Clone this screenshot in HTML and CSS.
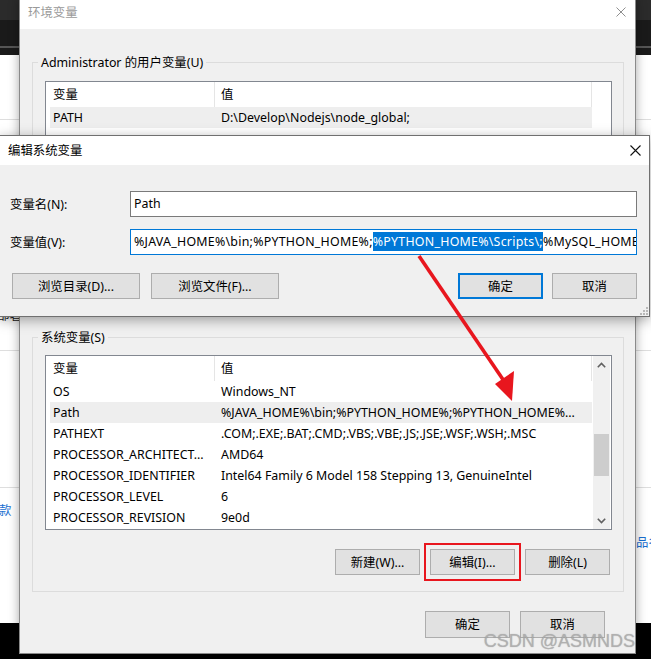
FILE: index.html
```html
<!DOCTYPE html>
<html lang="zh-CN">
<head>
<meta charset="utf-8">
<title>环境变量</title>
<link rel="stylesheet" href="styles.css">
</head>
<body>
<div class="desktop">
  <div class="bd-top"></div>
  <div class="bd-nav"></div>
  <div class="bd-line"></div>
  <div class="bd-sub"></div>
  <div class="bd-page">
    <div class="bd-row r1"></div>
    <div class="bd-row r2"><span class="bd-clip">部署</span></div>
    <div class="bd-row r3"></div>
    <div class="bd-row r4">
      <span class="link l-left">款</span>
      <span class="link l-right">品名称</span>
    </div>
  </div>
</div>

<section class="win env">
  <header class="titlebar env-title">
    <span class="title inactive">环境变量</span>
    <svg class="close" width="10" height="10" viewBox="0 0 10 10"><path d="M0.5 0.5L9.5 9.5M9.5 0.5L0.5 9.5" stroke="#8f8f8f" stroke-width="1"/></svg>
  </header>
  <div class="env-body">
    <fieldset class="group g-user">
      <legend>Administrator 的用户变量(U)</legend>
      <div class="list list-user">
        <div class="list-main">
          <div class="lhead"><span class="c1">变量</span><span class="c2">值</span></div>
          <div class="lrow sel"><span class="c1">PATH</span><span class="c2">D:\Develop\Nodejs\node_global;</span></div>
        </div>
      </div>
    </fieldset>

    <fieldset class="group g-sys">
      <legend>系统变量(S)</legend>
      <div class="list list-sys">
        <div class="list-main">
          <div class="lhead"><span class="c1">变量</span><span class="c2">值</span></div>
          <div class="lrow"><span class="c1">OS</span><span class="c2">Windows_NT</span></div>
          <div class="lrow sel"><span class="c1">Path</span><span class="c2">%JAVA_HOME%\bin;%PYTHON_HOME%;%PYTHON_HOME%...</span></div>
          <div class="lrow"><span class="c1">PATHEXT</span><span class="c2">.COM;.EXE;.BAT;.CMD;.VBS;.VBE;.JS;.JSE;.WSF;.WSH;.MSC</span></div>
          <div class="lrow"><span class="c1">PROCESSOR_ARCHITECT...</span><span class="c2">AMD64</span></div>
          <div class="lrow"><span class="c1">PROCESSOR_IDENTIFIER</span><span class="c2">Intel64 Family 6 Model 158 Stepping 13, GenuineIntel</span></div>
          <div class="lrow"><span class="c1">PROCESSOR_LEVEL</span><span class="c2">6</span></div>
          <div class="lrow"><span class="c1">PROCESSOR_REVISION</span><span class="c2">9e0d</span></div>
        </div>
        <div class="vscroll">
          <div class="sarrow"><svg width="9" height="6" viewBox="0 0 9 6"><path d="M0.8 5.2L4.5 1.5L8.2 5.2" fill="none" stroke="#606060" stroke-width="1.6"/></svg></div>
          <div class="strack"><div class="sthumb"></div></div>
          <div class="sarrow"><svg width="9" height="6" viewBox="0 0 9 6"><path d="M0.8 0.8L4.5 4.5L8.2 0.8" fill="none" stroke="#606060" stroke-width="1.6"/></svg></div>
        </div>
      </div>
      <div class="btnrow">
        <button class="btn">新建(W)...</button>
        <button class="btn marked">编辑(I)...</button>
        <button class="btn">删除(L)</button>
      </div>
    </fieldset>

    <div class="dlg-actions">
      <button class="btn tall">确定</button>
      <button class="btn tall">取消</button>
    </div>
  </div>
</section>

<section class="win edit">
  <header class="titlebar edit-title">
    <span class="title">编辑系统变量</span>
    <svg class="close" width="11" height="11" viewBox="0 0 11 11"><path d="M0.5 0.5L10.5 10.5M10.5 0.5L0.5 10.5" stroke="#111" stroke-width="1.1"/></svg>
  </header>
  <div class="edit-body">
    <div class="fields">
      <label class="flabel">变量名(N):</label>
      <div class="field">Path</div>
      <label class="flabel">变量值(V):</label>
      <div class="field focus">%JAVA_HOME%\bin;%PYTHON_HOME%;<span class="hl">%PYTHON_HOME%\Scripts\;</span>%MySQL_HOME%\bin;%MAVEN_HOME%\bin;</div>
    </div>
    <div class="edit-btns">
      <button class="btn wide">浏览目录(D)...</button>
      <button class="btn wide">浏览文件(F)...</button>
      <span class="spacer"></span>
      <button class="btn default">确定</button>
      <button class="btn">取消</button>
    </div>
  </div>
  <svg class="grip" width="9" height="9" viewBox="0 0 9 9">
    <rect x="7" y="1" width="2" height="2" fill="#b8b8b8"/>
    <rect x="4" y="4" width="2" height="2" fill="#b8b8b8"/>
    <rect x="7" y="4" width="2" height="2" fill="#b8b8b8"/>
    <rect x="1" y="7" width="2" height="2" fill="#b8b8b8"/>
    <rect x="4" y="7" width="2" height="2" fill="#b8b8b8"/>
    <rect x="7" y="7" width="2" height="2" fill="#b8b8b8"/>
  </svg>
</section>

<svg class="annot" width="651" height="659" viewBox="0 0 651 659">
  <line x1="419" y1="256" x2="504" y2="381" stroke="#e8161e" stroke-width="3.6"/>
  <polygon points="495,384 514,371 512,401" fill="#e8161e"/>
</svg>

<div class="watermark">CSDN @ASMNDS</div>
</body>
</html>
```

FILE: styles.css
```css
* { box-sizing: border-box; }

body {
  margin: 0;
  width: 651px;
  height: 659px;
  overflow: hidden;
  position: relative;
  background: #000;
  font: 12.4px/17px "Noto Sans", "Noto Sans CJK SC", sans-serif;
  color: #000;
}

/* ---------- backdrop (app behind the dialogs) ---------- */
.desktop { display: flex; flex-direction: column; }
.bd-top { height: 20px; background: #2b2b2b; }
.bd-nav { height: 26px; background: #1a1a1a; }
.bd-line { height: 2px; background: #555; }
.bd-sub { height: 7px; background: #1a1a1a; }
.bd-page { height: 568px; background: #fff; display: flex; flex-direction: column; }
.bd-row { border-bottom: 1px solid #dedede; }
.r1 { height: 65px; }
.r2 { height: 231px; display: flex; flex-direction: column; justify-content: flex-end; padding-bottom: 26px; }
.r3 { height: 137px; }
.r4 { flex: 1; border-bottom: none; display: flex; flex-direction: column; align-items: flex-start; }
.bd-clip { margin-left: -3px; color: #222; }
.link { color: #1a6fd1; white-space: nowrap; }
.l-left { margin-left: -1px; margin-top: 14px; }
.l-right { margin-left: 636px; margin-top: 15px; }

/* ---------- windows ---------- */
.win {
  position: absolute;
  background: #f0f0f0;
  border: 1px solid #8a8a8a;
  display: flex;
  flex-direction: column;
}
.env {
  left: 19px;
  top: -1px;
  width: 617px;
  height: 655px;
  box-shadow: 0 0 10px rgba(0, 0, 0, 0.35);
}
.edit {
  left: -1px;
  top: 135px;
  width: 651px;
  height: 182px;
  border-color: #707070;
  box-shadow: 0 3px 12px rgba(0, 0, 0, 0.35);
}

.titlebar {
  background: #fff;
  display: flex;
  align-items: center;
  justify-content: space-between;
  flex: none;
}
.env-title { height: 29px; padding: 0 9px 5px 8px; }
.edit-title { height: 29px; padding: 0 8px 1px 8px; }
.title.inactive { color: #9a9a9a; }

/* ---------- env body ---------- */
.env-body { padding: 25px 11px 0 12px; display: flex; flex-direction: column; }

.group {
  margin: 0;
  border: 1px solid #dcdcdc;
  padding: 10px 11px 12px 12px;
  min-width: 0;
}
.group legend {
  padding: 0 3px;
  margin-left: -7px;
  line-height: 17px;
}
.g-sys { margin-top: 15px; padding: 9px 11px 16px 12px; }

.list {
  border: 1px solid #828790;
  background: #fff;
  display: flex;
}
.list-user { height: 220px; }
.list-sys { height: 175px; }
.list-main {
  flex: 1;
  padding: 0 1px 0 4px;
  display: flex;
  flex-direction: column;
  min-width: 0;
}
.list-user .list-main { margin-right: 18px; }

.lhead { height: 25px; display: flex; align-items: stretch; flex: none; }
.lhead .c1 { width: 165px; border-right: 1px solid #e5e5e5; padding-left: 3px; display: flex; align-items: center; }
.lhead .c2 { flex: 1; border-right: 1px solid #e5e5e5; padding-left: 6px; display: flex; align-items: center; }

.lrow { height: 21px; display: flex; align-items: center; flex: none; white-space: nowrap; padding-bottom: 1px; }
.lrow.sel { background: #eeeeee; }
.lrow .c1 { width: 165px; padding-left: 3px; overflow: hidden; }
.lrow .c2 { flex: 1; padding-left: 6px; overflow: hidden; }

.vscroll {
  width: 17px;
  margin-right: 1px;
  background: #f0f0f0;
  display: flex;
  flex-direction: column;
}
.sarrow { height: 17px; display: flex; align-items: center; justify-content: center; flex: none; }
.strack { flex: 1; display: flex; flex-direction: column; align-items: center; }
.sthumb { width: 15px; height: 42px; margin-top: 61px; background: #cdcdcd; }

.btn {
  font: inherit;
  color: #000;
  background: #e1e1e1;
  border: 1px solid #adadad;
  height: 26px;
  width: 85px;
  padding: 0;
  display: flex;
  align-items: center;
  justify-content: center;
  white-space: nowrap;
}
.btn.tall { height: 27px; }
.btn.wide { width: 128px; }
.btn.default { border: 2px solid #0078d7; }
.btn.marked { outline: 2px solid #e8161e; outline-offset: 4px; }

.btnrow {
  margin-top: 19px;
  display: flex;
  justify-content: flex-end;
  gap: 10px;
  padding-right: 2px;
}
.dlg-actions {
  margin-top: 19px;
  display: flex;
  justify-content: flex-end;
  gap: 10px;
  padding-right: 19px;
}

/* ---------- edit dialog ---------- */
.edit-body { flex: 1; padding: 26px 12px 0 0; display: flex; flex-direction: column; }
.fields {
  display: grid;
  grid-template-columns: 130px 1fr;
  row-gap: 12px;
  align-items: center;
}
.flabel { padding-left: 10px; }
.field {
  height: 26px;
  background: #fff;
  border: 1px solid #7a7a7a;
  padding: 0 3px;
  line-height: 24px;
  white-space: nowrap;
  overflow: hidden;
}
.field.focus { border-color: #0078d7; letter-spacing: 0.25px; }
.hl { background: #0078d7; color: #fff; display: inline-block; line-height: 19px; }

.edit-btns { margin-top: 18px; display: flex; gap: 11px; padding-left: 12px; }
.edit-btns .spacer { flex: 1; }
.edit-btns .btn.default + .btn { margin-left: -2px; }

.grip { position: absolute; right: 1px; bottom: 1px; }

/* ---------- overlays ---------- */
.annot { position: absolute; left: 0; top: 0; pointer-events: none; }
.watermark {
  position: absolute;
  right: 16px;
  bottom: 8px;
  font: 18px/20px "Liberation Sans", sans-serif;
  color: rgba(175, 175, 175, 0.85);
  text-shadow: 0 0 1px rgba(60, 60, 60, 0.35);
  white-space: nowrap;
}
```
